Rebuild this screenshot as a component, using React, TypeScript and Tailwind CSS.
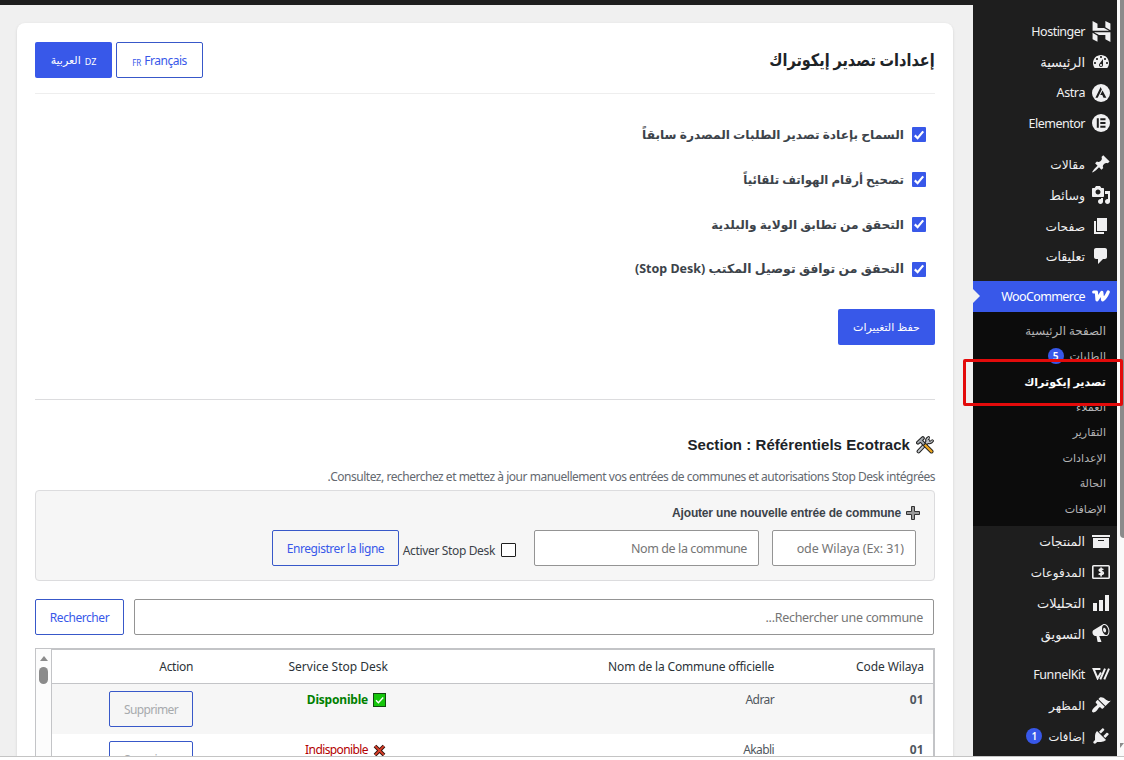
import React from 'react';
import { SiHostinger } from 'react-icons/si';

interface MenuItem {
  label: string;
  icon: React.ReactNode;
  badge?: string;
  textClass?: string;
}

function Dash({ d }: { d: string }) {
  return (
    <svg className="w-5 h-5 shrink-0" viewBox="0 0 20 20" fill="currentColor" fillRule="evenodd">
      <path d={d} />
    </svg>
  );
}

function AstraIcon() {
  return (
    <svg className="w-[18px] h-[18px]" viewBox="0 0 20 20">
      <circle cx="10" cy="10" r="10" fill="#f0f0f1" />
      <path d="M9.6 3.4 3.8 15.2h2.5l4.6-9.2zM11.7 7.2l-2.6 5h2.300l1.400 3h3.200z" fill="#1e1e1e" />
    </svg>
  );
}

function ElementorIcon() {
  return (
    <svg className="w-[18px] h-[18px]" viewBox="0 0 18 18">
      <circle cx="9" cy="9" r="9" fill="#f0f0f1" />
      <path d="M4.8 4.3h2v9.4h-2zM8.3 4.3h5.2v1.9H8.3zM8.3 8.05h5.2v1.9H8.3zM8.3 11.8h5.2v1.9H8.3z" fill="#1e1e1e" />
    </svg>
  );
}

function WooIcon() {
  return (
    <svg className="w-[18px] h-[12px] shrink-0" viewBox="0 0 18 12" fill="none" stroke="#fff" strokeWidth="3.2" strokeLinecap="round" strokeLinejoin="round">
      <path d="M1.7 2H4.4L5 9.800 9.800 2.400l.8 7.400Q13.600 8 16.200 2" />
    </svg>
  );
}

function PaymentsIcon() {
  return (
    <svg className="w-[18px] h-[14px]" viewBox="0 0 18 14" fill="none" stroke="#f0f0f1">
      <rect x="0.8" y="0.8" width="16.4" height="12.4" rx="0.8" strokeWidth="1.6" />
      <path d="M11.3 4.7c-.6-.7-4.1-1.1-4.1.6 0 1.9 4.1.8 4.1 2.8 0 1.8-3.8 1.4-4.6.5M9.1 2.6v8.8" strokeWidth="1.7" />
    </svg>
  );
}

function FunnelKitIcon() {
  return (
    <svg className="w-[18px] h-[12px]" viewBox="0 0 18 12" fill="none" stroke="#f0f0f1" strokeWidth="2">
      <path d="M8.4 1H1.6l4 9.4L9 4.4" />
      <path d="M13 .6 8.3 11.4M17 .6l-4.7 10.8" />
    </svg>
  );
}

const paths = {
  dashboard:
    'M3.76 16h12.48c1.1-1.37 1.76-3.11 1.76-5 0-4.42-3.58-8-8-8s-8 3.58-8 8c0 1.89.66 3.63 1.76 5zM10 4c.55 0 1 .45 1 1s-.45 1-1 1-1-.45-1-1 .45-1 1-1zM6 6c.55 0 1 .45 1 1s-.45 1-1 1-1-.45-1-1 .45-1 1-1zm8 0c.55 0 1 .45 1 1s-.45 1-1 1-1-.45-1-1 .45-1 1-1zm-5.37 5.55L12 7v6c0 1.1-.9 2-2 2s-2-.9-2-2c0-.57.24-1.08.63-1.45zM4 10c.55 0 1 .45 1 1s-.45 1-1 1-1-.45-1-1 .45-1 1-1zm12 0c.55 0 1 .45 1 1s-.45 1-1 1-1-.45-1-1 .45-1 1-1zm-5 3c0-.55-.45-1-1-1s-1 .45-1 1 .45 1 1 1 1-.45 1-1z',
  post: 'M10.44 3.02l1.82-1.82 6.36 6.35-1.83 1.82c-1.05-.68-2.48-.57-3.41.36l-.75.75c-.92.93-1.04 2.35-.35 3.41l-1.83 1.82-2.41-2.41-2.8 2.79c-.42.42-3.38 2.71-3.8 2.29s1.86-3.39 2.28-3.81l2.79-2.79L4.1 9.36l1.83-1.82c1.05.69 2.48.57 3.4-.36l.75-.75c.93-.92 1.05-2.35.36-3.41z',
  media:
    'M13 11V4c0-.55-.45-1-1-1h-1.67L9 1H5L3.67 3H2c-.55 0-1 .45-1 1v7c0 .55.45 1 1 1h10c.55 0 1-.45 1-1zM7 4.5c1.38 0 2.5 1.12 2.5 2.5S8.38 9.5 7 9.5 4.5 8.38 4.5 7 5.62 4.5 7 4.5zM14 6h5v10.5c0 1.38-1.12 2.5-2.5 2.5S14 17.88 14 16.5s1.12-2.5 2.5-2.5c.17 0 .34.02.5.05V9h-3V6zm-4 8.05V13h2v3.5c0 1.38-1.12 2.5-2.5 2.5S7 17.88 7 16.5 8.12 14 9.5 14c.17 0 .34.02.5.05z',
  page: 'M6 15V2h10v13H6zm-1 1h8v2H3V5h2v11z',
  comments: 'M5 2h9c1.1 0 2 .9 2 2v7c0 1.1-.9 2-2 2h-2l-5 5v-5H5c-1.1 0-2-.9-2-2V4c0-1.1.9-2 2-2z',
  archive: 'M19 4v2H1V4h18zM2 7h16v10H2V7zm11 3V9H7v1h6z',
  chart: 'M18 18V2h-4v16h4zm-6 0V7H8v11h4zm-6 0v-8H2v8h4z',
  megaphone:
    'M18.15 5.94c.46 1.62.38 3.22-.02 4.48-.42 1.28-1.26 2.18-2.3 2.48-.16.06-.26.06-.4.06-.06.02-.12.02-.18.02-.06.02-.14.02-.22.02h-6.8l2.22 5.5c.02.14-.06.26-.14.34-.08.1-.24.16-.34.16H6.95c-.1 0-.26-.06-.34-.16-.08-.08-.16-.2-.14-.34l-1-5.5H4.25l-.02-.02c-.5.06-1.08-.18-1.54-.62s-.88-1.08-1.06-1.88c-.24-.8-.2-1.56-.02-2.2.18-.62.58-1.08 1.06-1.3l.02-.02 9-5.4c.1-.06.18-.1.24-.16.06-.04.14-.08.24-.12.16-.08.28-.12.5-.18 1.04-.3 2.24.1 3.22.98s1.84 2.24 2.26 3.86zm-2.58 5.98h-.02c.4-.1.74-.34 1.04-.7.58-.7.86-1.76.86-3.04 0-.64-.1-1.3-.28-1.98-.34-1.36-1.02-2.5-1.78-3.24s-1.68-1.1-2.46-.88c-.82.22-1.4.96-1.7 2-.32 1.04-.28 2.36.06 3.72.38 1.36 1 2.5 1.8 3.24.78.74 1.62 1.1 2.48.88zm-2.54-7.08c.22-.04.42-.02.62.04.38.16.76.48 1.02 1s.42 1.2.42 1.78c0 .3-.04.56-.12.8-.18.48-.44.84-.86.94-.34.1-.8-.06-1.14-.4s-.64-.86-.78-1.5c-.18-.62-.12-1.24.02-1.72s.48-.84.82-.94z',
  appearance:
    'M14.48 11.06L7.41 3.99l1.5-1.5c.5-.56 2.3-.47 3.51.32 1.21.8 1.43 1.28 2.91 2.1 1.18.64 2.45 1.26 4.45.85zm-.71.71L6.7 4.7 4.93 6.47c-.39.39-.39 1.02 0 1.41l1.06 1.06c.39.39.39 1.03 0 1.42-.6.6-1.43 1.11-2.21 1.69-.35.26-.7.53-1.01.84C1.43 14.23.4 16.08 1.4 17.07c.99 1 2.84-.03 4.18-1.36.31-.31.58-.66.85-1.02.57-.78 1.08-1.61 1.69-2.21.39-.39 1.02-.39 1.41 0l1.06 1.06c.39.39 1.02.39 1.41 0z',
  plugins:
    'M13.11 4.36L9.87 7.6 8 5.73l3.24-3.24c.35-.34 1.05-.2 1.56.32.52.51.66 1.21.31 1.55zm-8 1.77l.91-1.12 9.01 9.01-1.19.84c-.71.71-2.63 1.16-3.82 1.16H6.14L4.9 17.26c-.59.59-1.54.59-2.12 0-.59-.58-.59-1.53 0-2.12l1.24-1.24v-3.88c0-1.13.4-3.19 1.09-3.89zm7.26 3.97l3.24-3.24c.34-.35 1.04-.21 1.55.31.52.51.66 1.21.31 1.55l-3.24 3.25z',
};

const menuTop: MenuItem[] = [
  { label: 'Hostinger', icon: <SiHostinger size={21} className="shrink-0" />, textClass: 'tracking-[-0.5px]' },
  { label: 'الرئيسية', icon: <Dash d={paths.dashboard} />, textClass: 'text-[13px]' },
  { label: 'Astra', icon: <AstraIcon />, textClass: 'tracking-[-0.4px]' },
  { label: 'Elementor', icon: <ElementorIcon />, textClass: 'tracking-[-0.5px]' },
];

const menuContent: MenuItem[] = [
  { label: 'مقالات', icon: <Dash d={paths.post} />, textClass: 'text-[12.2px]' },
  { label: 'وسائط', icon: <Dash d={paths.media} /> },
  { label: 'صفحات', icon: <Dash d={paths.page} />, textClass: 'text-[12.2px]' },
  { label: 'تعليقات', icon: <Dash d={paths.comments} /> },
];

const menuShop: MenuItem[] = [
  { label: 'المنتجات', icon: <Dash d={paths.archive} /> },
  { label: 'المدفوعات', icon: <PaymentsIcon />, textClass: 'text-[12px]' },
  { label: 'التحليلات', icon: <Dash d={paths.chart} />, textClass: 'text-[13px]' },
  { label: 'التسويق', icon: <Dash d={paths.megaphone} />, textClass: 'text-[13px]' },
];

const menuTools: MenuItem[] = [
  { label: 'FunnelKit', icon: <FunnelKitIcon />, textClass: 'tracking-[-0.4px]' },
  { label: 'المظهر', icon: <Dash d={paths.appearance} />, textClass: 'text-[12px]' },
  { label: 'إضافات', icon: <Dash d={paths.plugins} />, badge: '1', textClass: 'text-[11.6px]' },
];

const submenu = [
  { label: 'الصفحة الرئيسية', textClass: 'text-[11.8px]' },
  { label: 'الطلبات', badge: '5' },
  { label: 'تصدير إيكوتراك', current: true },
  { label: 'العملاء' },
  { label: 'التقارير' },
  { label: 'الإعدادات' },
  { label: 'الحالة' },
  { label: 'الإضافات' },
];

const options = [
  { label: 'السماح بإعادة تصدير الطلبات المصدرة سابقاً', textClass: 'text-[12.2px]' },
  { label: 'تصحيح أرقام الهواتف تلقائياً', textClass: 'text-[11.8px]' },
  { label: 'التحقق من تطابق الولاية والبلدية', textClass: 'text-[12.2px]' },
  { label: 'التحقق من توافق توصيل المكتب (Stop Desk)', textClass: 'text-[12.5px]' },
];

const rows = [
  { code: '01', name: 'Adrar', available: true },
  { code: '01', name: 'Akabli', available: false },
];

function Badge({ children }: { children: React.ReactNode }) {
  return (
    <span className="w-4 h-4 rounded-full bg-[#3858e9] text-white text-[10px] font-semibold leading-4 text-center">
      {children}
    </span>
  );
}

function MenuGroup({ items }: { items: MenuItem[] }) {
  return (
    <ul>
      {items.map((item) => (
        <li key={item.label} className="h-[30.7px] flex items-center pr-[7px] text-[12.5px] text-[#f0f0f1]">
          <span className="w-[18px] -mt-px flex justify-center">{item.icon}</span>
          <span className={`mr-[7px] pt-px whitespace-nowrap ${item.textClass ?? ''}`}>{item.label}</span>
          {item.badge && (
            <span className="mr-[6px] flex">
              <Badge>{item.badge}</Badge>
            </span>
          )}
        </li>
      ))}
    </ul>
  );
}

function Sidebar() {
  return (
    <nav className="relative w-[144px] shrink-0 bg-[#1e1e1e] pt-[11.4px]">
      <MenuGroup items={menuTop} />
      <div className="h-[10.3px]" />
      <MenuGroup items={menuContent} />
      <div className="h-[8.7px]" />
      <div className="relative h-[31px] bg-[#3858e9] flex items-center pr-[7px] text-[12.5px] text-white">
        <span className="w-[18px] flex justify-center">
          <WooIcon />
        </span>
        <span className="mr-[7px] pt-[2px] tracking-[-0.6px]">WooCommerce</span>
        <span className="absolute left-0 top-[8px] border-y-[7.5px] border-y-transparent border-l-[7px] border-l-[#f0f0f0]" />
      </div>
      <ul className="h-[214px] bg-[#0c0c0c] pt-[6px]">
        {submenu.map((item) => (
          <li
            key={item.label}
            className={`h-[25.5px] flex items-center pr-[11px] ${
              item.current ? 'pt-px text-[11.1px] text-white font-bold' : 'text-[#b4b4b5]'
            } ${item.current ? '' : item.textClass ?? 'text-[11.1px]'}`}
          >
            {item.label}
            {item.badge && (
              <span className="mr-[6px] flex">
                <Badge>{item.badge}</Badge>
              </span>
            )}
          </li>
        ))}
      </ul>
      <div className="h-[0.7px]" />
      <MenuGroup items={menuShop} />
      <div className="h-[10.3px]" />
      <MenuGroup items={menuTools} />
      <div className="absolute -left-[10px] top-[354px] w-[160px] h-[47px] border-[3px] border-[#e30b0b] rounded-[2px]" />
    </nav>
  );
}

function CheckedBox() {
  return (
    <span className="w-[14px] h-[15px] mb-px rounded-[1px] bg-[#3858e9] flex items-center justify-center">
      <svg className="w-[12px] h-[12px]" viewBox="0 0 12 12" fill="none" stroke="#fff" strokeWidth="2.2">
        <path d="M1.8 6.4 4.6 9.2 10.2 2.4" />
      </svg>
    </span>
  );
}

function ToolsIcon() {
  return (
    <svg className="w-[18px] h-[18px]" viewBox="0 0 18 18" strokeLinecap="round">
      <path d="M2.6 15.4 12.4 5" stroke="#222" strokeWidth="4" />
      <path d="M12.5 1.6c-2 .8-2.3 2.7-1.4 4.3 1.4 1.3 3.8 1.3 5.3-1" stroke="#222" strokeWidth="3" fill="none" />
      <path d="M2.6 15.4 12.4 5" stroke="#c3c7cb" strokeWidth="2" />
      <path d="M12.6 1.8c-1.7.8-2 2.5-1.2 3.9 1.3 1.1 3.3 1.1 4.8-.8" stroke="#c3c7cb" strokeWidth="1.4" fill="none" />
      <path d="M7.5 7.5 15.5 15.5" stroke="#222" strokeWidth="4" />
      <path d="M8.5 8.5 15.5 15.5" stroke="#f0a81e" strokeWidth="2.3" />
      <path d="M2 6.6 6.8 2.2M4.6 4.4 7.5 7.5" stroke="#222" strokeWidth="4" />
      <path d="M2 6.6 6.8 2.2M4.6 4.4 7.5 7.5" stroke="#a4a9ae" strokeWidth="1.9" />
    </svg>
  );
}

function PlusIcon() {
  return (
    <svg className="w-[14px] h-[14px]" viewBox="0 0 14 14">
      <path d="M5.5.5h3v5h5v3h-5v5h-3v-5h-5v-3h5z" fill="#9a9a9a" stroke="#333" />
    </svg>
  );
}

function StatusIcon({ available }: { available: boolean }) {
  if (available) {
    return (
      <svg className="w-[13px] h-[14px]" viewBox="0 0 13 14" fill="none">
        <rect x="0.5" y="0.5" width="12" height="13" fill="#16c60c" stroke="#114a11" />
        <path d="M3 7.3 5.4 9.7 10.2 4.5" stroke="#fff" strokeWidth="1.4" />
      </svg>
    );
  }
  return (
    <svg className="w-[13px] h-[13px]" viewBox="0 0 13 13">
      <path d="m2 2 9 9M11 2l-9 9" stroke="#331410" strokeWidth="3.8" />
      <path d="m2.2 2.2 8.6 8.6M10.8 2.2l-8.6 8.6" stroke="#dd3f28" strokeWidth="1.8" />
    </svg>
  );
}

const outlineButton =
  'h-9 pt-[2px] shrink-0 flex items-center justify-center border border-[#3858c9] rounded-[2px] text-[#3858e9] text-[12px] tracking-[-0.45px] whitespace-nowrap';
const inputBox =
  'h-9 pt-[2px] flex items-center border border-[#949494] rounded-[2px] bg-white text-[12.5px] text-[#757575] whitespace-nowrap';

function CommuneTable() {
  return (
    <div className="mt-[13px] h-[200px] flex border border-[#c3c4c7] overflow-hidden">
      <table className="flex-1 block border border-[#c3c4c7] text-[12px]">
        <thead className="block">
          <tr className="flex h-[34px] items-center border-b border-[#c3c4c7] text-[#2c3338] tracking-[-0.1px]">
            <th className="w-[159px] pr-[9px] text-right font-normal">Code Wilaya</th>
            <th className="w-[386px] text-right font-normal tracking-[-0.15px]">Nom de la Commune officielle</th>
            <th className="w-[195px] text-right font-normal tracking-normal">Service Stop Desk</th>
            <th className="text-right font-normal tracking-[-0.3px]">Action</th>
          </tr>
        </thead>
        <tbody className="block">
          {rows.map((row) => (
            <tr key={row.name} className="flex h-[50px] pt-[7px] odd:bg-[#f6f6f6] text-[#50575e]">
              <td className="w-[159px] pr-[9px] leading-[18px] font-bold tracking-[0.3px]">{row.code}</td>
              <td className="w-[386px] leading-[18px] tracking-[-0.6px]">{row.name}</td>
              <td className="w-[195px]">
                <span
                  className={`flex items-center gap-[5px] pr-[2px] leading-[18px] ${
                    row.available ? 'text-[#008000] font-bold tracking-[-0.2px]' : 'text-[#b20000] tracking-[-0.6px]'
                  }`}
                >
                  <StatusIcon available={row.available} />
                  {row.available ? 'Disponible' : 'Indisponible'}
                </span>
              </td>
              <td>
                <span className={`${outlineButton} w-[84px] !text-[#a7aaad] !tracking-[-0.65px]`}>Supprimer</span>
              </td>
            </tr>
          ))}
        </tbody>
      </table>
      <div className="w-[15px] bg-[#fcfcfc] flex flex-col items-center pt-[7px]">
        <span className="border-x-[4.5px] border-x-transparent border-b-[5px] border-b-[#8b8b8b]" />
        <span className="mt-[6px] w-[9px] h-[17px] rounded-full bg-[#8b8b8b]" />
      </div>
    </div>
  );
}

function SettingsPanel() {
  return (
    <main className="w-[936px] h-[760px] mt-[18px] mr-5 shrink-0 bg-white rounded-lg shadow-[0_1px_3px_rgba(0,0,0,0.12)] px-[18px] pt-[19px]">
      <header className="h-[52px] flex items-start justify-between border-b border-[#eeeeee]">
        <h1 className="leading-9 text-[17px] font-bold text-[#1d2327] origin-right scale-x-[0.85]">
          إعدادات تصدير إيكوتراك
        </h1>
        <div className="flex gap-1">
          <span className={`${outlineButton} w-[87px] gap-[3px]`} dir="ltr">
            <span className="text-[8px] tracking-normal pt-[3px]">FR</span>
            <span className="tracking-[-0.5px]">Français</span>
          </span>
          <span className="w-[77px] h-9 pt-px rounded-[2px] bg-[#3858e9] text-white flex items-center justify-center gap-1" dir="ltr">
            <span className="text-[11px]">العربية</span>
            <span className="text-[9px] pt-[2px]">DZ</span>
          </span>
        </div>
      </header>

      <ul className="pt-[19px]">
        {options.map((option) => (
          <li key={option.label} className="h-[44.8px] flex items-center gap-2 pr-[9px] font-bold text-[#3c434a]">
            <CheckedBox />
            <span className={option.textClass}>{option.label}</span>
          </li>
        ))}
      </ul>
      <div className="mt-[17px] w-[97px] h-9 pt-px rounded-[2px] bg-[#3858e9] text-white text-[11px] flex items-center justify-center">
        حفظ التغييرات
      </div>
      <hr className="mt-[54px] border-[#dcdcde]" />

      <h2 className="mt-[34px] mr-px h-[22px] flex items-center gap-[6px] text-[15px] tracking-[0.05px] font-bold text-[#1d2327] font-['Liberation_Sans',sans-serif]">
        <ToolsIcon />
        <span>Section : Référentiels Ecotrack</span>
      </h2>
      <p className="mt-[12px] h-[18px] leading-[18px] text-[12px] text-[#646970] tracking-[-0.48px] whitespace-nowrap">
        Consultez, recherchez et mettez à jour manuellement vos entrées de communes et autorisations Stop Desk intégrées.
      </p>

      <section className="mt-[4px] h-[91px] border border-[#dcdcde] rounded bg-[#f6f6f6] pt-[13px] pr-[15px]">
        <h3 className="-mr-px h-[18px] flex items-center gap-[5px] text-[12px] tracking-[-0.17px] font-bold text-[#3c434a] font-['Liberation_Sans',sans-serif]">
          <PlusIcon />
          <span>Ajouter une nouvelle entrée de commune</span>
        </h3>
        <div className="mt-[8px] pr-[3px] flex items-center">
          <div className={`${inputBox} w-[144px] pr-[11px]`}>
            <span className="w-[107px] overflow-hidden flex tracking-[-0.1px]" dir="rtl">
              <bdi dir="ltr">Code Wilaya (Ex: 31)</bdi>
            </span>
          </div>
          <div className={`${inputBox} mr-[13px] w-[225px] pr-[11px] tracking-[-0.4px]`}>Nom de la commune</div>
          <span className="mr-[18px] mt-[3px] w-[15px] h-[14px] border border-[#1e1e1e] rounded-[1px] bg-white" />
          <span className="mr-[6px] mt-[5px] w-[92px] text-[12px] tracking-[-0.35px] text-[#3c434a] whitespace-nowrap">
            Activer Stop Desk
          </span>
          <span className={`${outlineButton} mr-[4px] w-[127px]`}>Enregistrer la ligne</span>
        </div>
      </section>

      <div className="mt-[18px] mr-px flex gap-[10px]">
        <div className={`${inputBox} flex-1 pr-[10px] tracking-[-0.3px]`}>Rechercher une commune...</div>
        <span className={`${outlineButton} w-[89px]`}>Rechercher</span>
      </div>
      <CommuneTable />
    </main>
  );
}

export default function App() {
  return (
    <div className="w-[1124px] h-[760px] overflow-hidden bg-white font-['Noto_Sans','DejaVu_Sans',sans-serif]">
      <div className="h-[756px] flex overflow-hidden" dir="rtl">
        <div className="w-[7px] shrink-0 bg-[#fafafa] flex flex-col justify-between">
          <span className="w-[4px] h-[538px] rounded-bl bg-[#8b8b8b]" />
          <span className="mb-[8px] w-[4px] overflow-hidden">
            <span className="block w-0 border-x-[4px] border-x-transparent border-t-[5px] border-t-[#8b8b8b]" />
          </span>
        </div>
        <div className="w-[1117px] flex flex-col">
          <div className="h-[5px] shrink-0 bg-[#1e1e1e]" />
          <div className="flex flex-1 bg-[#f0f0f0]">
            <Sidebar />
            <SettingsPanel />
          </div>
        </div>
      </div>
      <div className="h-px bg-[#c4c4c4]" />
    </div>
  );
}
